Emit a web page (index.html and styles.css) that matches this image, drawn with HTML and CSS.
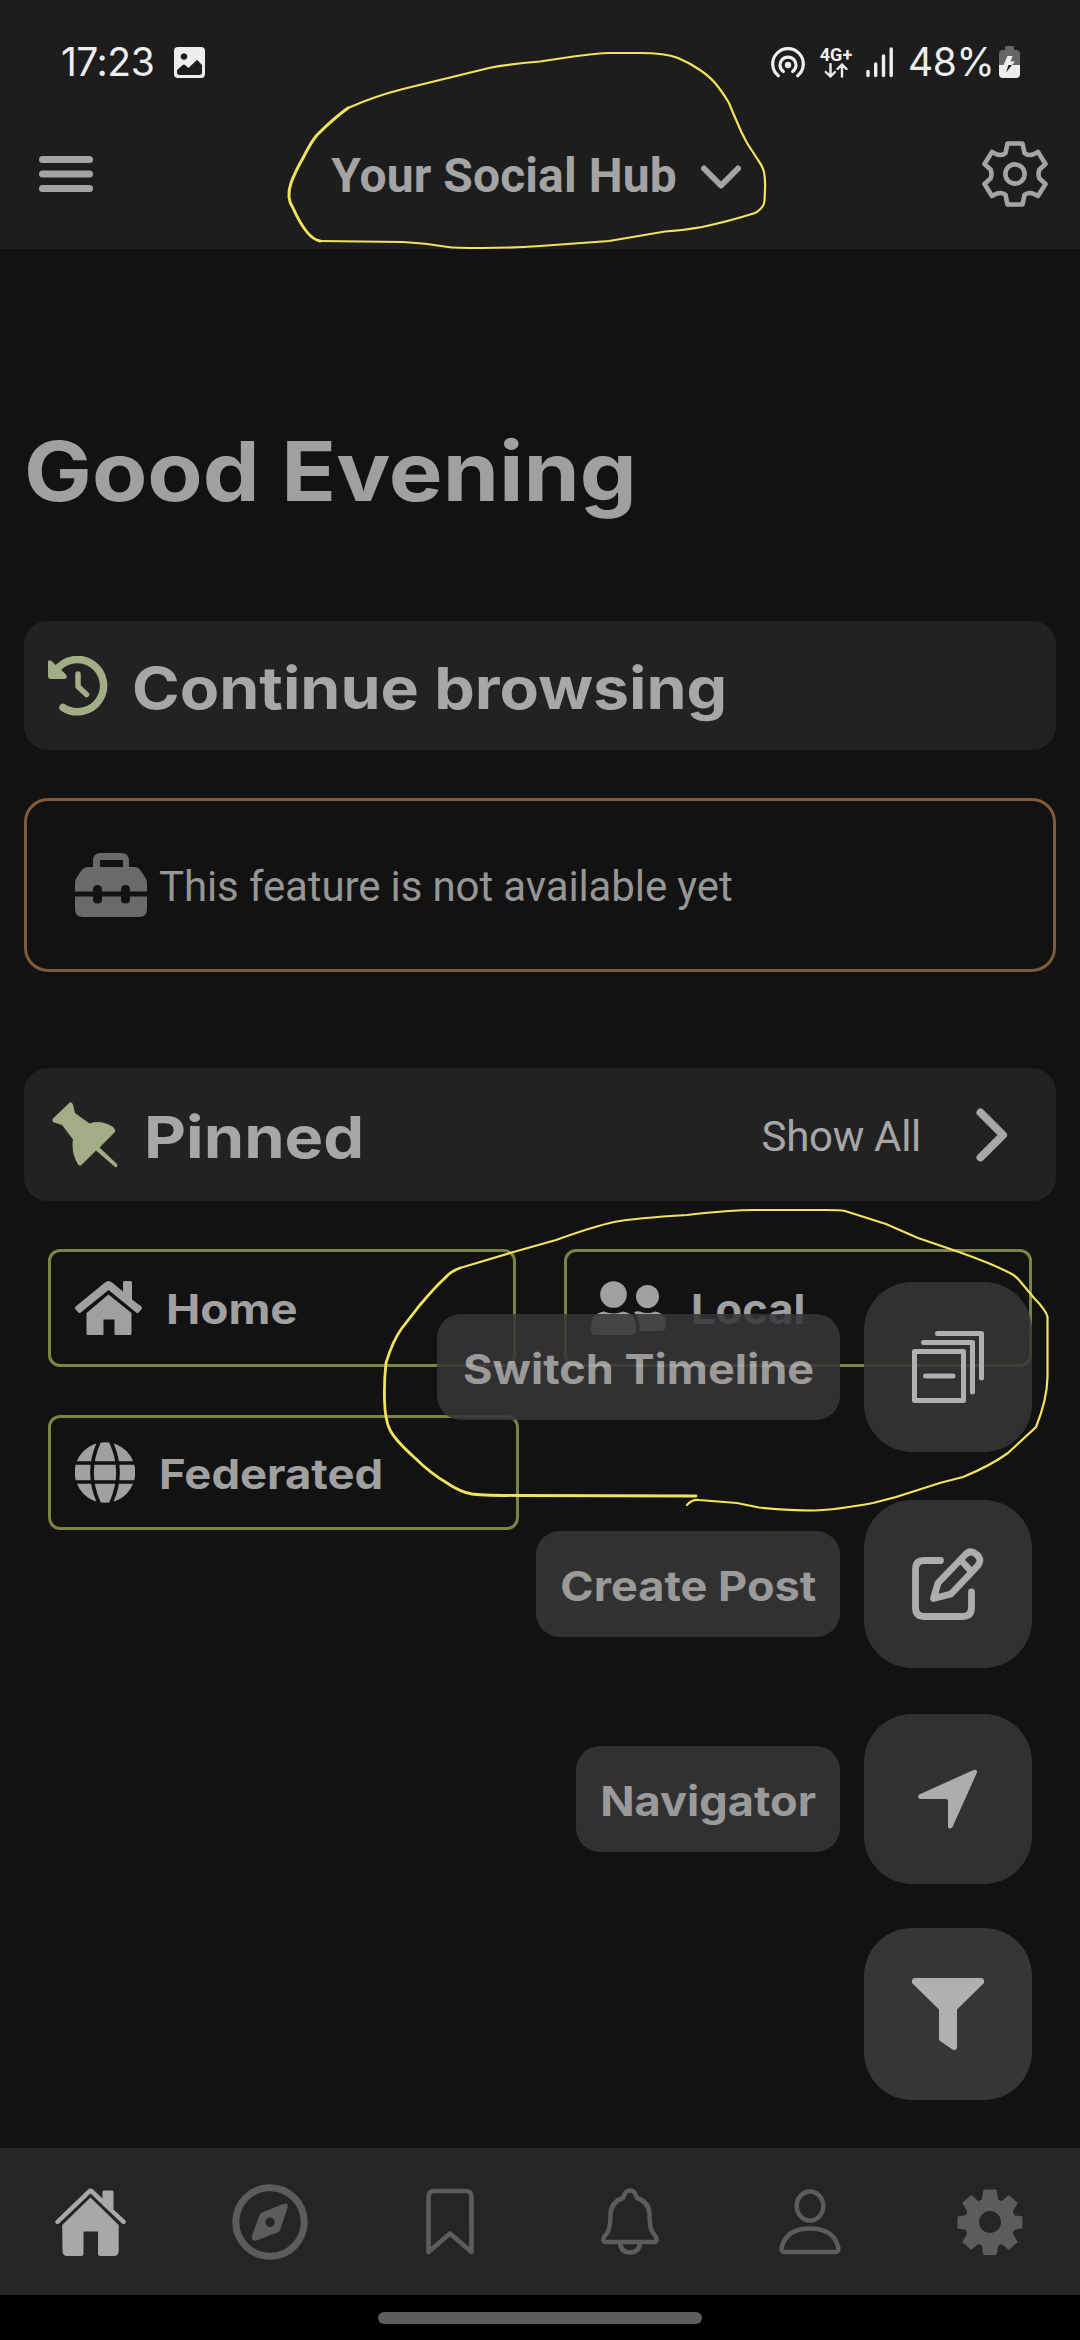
FILE: index.html
```html
<!DOCTYPE html>
<html lang="en">
<head>
<meta charset="utf-8">
<title>Your Social Hub</title>
<link rel="stylesheet" href="styles.css">
</head>
<body>
<div class="screen">
  <header class="header">
    <div class="status">
      <div class="status-left">
        <span class="clock">17:23</span>
        <svg width="31" height="31" viewBox="0 0 31 31"><path fill="#eee" fill-rule="evenodd" d="M4 0h23a4 4 0 0 1 4 4v23a4 4 0 0 1-4 4H4a4 4 0 0 1-4-4V4a4 4 0 0 1 4-4zM10 6.200a3.300 3.300 0 1 0 .01 0zM3 25.500c0 1.500 1 2.500 2.500 2.500h20c1.500 0 2.500-1 2.500-2.500V18l-4-4.300c-.8-.8-1.200-.8-2 0L14.500 21 11 18c-.8-.7-1.400-.7-2.200 0L3 23z"/></svg>
      </div>
      <div class="status-right">
        <svg class="hotspot" width="34" height="31" viewBox="0 0 34 31" fill="none" stroke="#eee" stroke-width="3.200" stroke-linecap="round"><circle cx="17" cy="18" r="3.200" fill="#eee" stroke="none"/><path d="M12.300 24.500a8 8 0 1 1 9.400 0M7.300 28.800a15.300 15.300 0 1 1 19.400 0"/></svg>
        <span class="network"><span class="network-type">4G+</span>
          <svg width="24" height="15" viewBox="0 0 24 15" fill="none" stroke="#eee" stroke-width="2.400" stroke-linecap="round" stroke-linejoin="round"><path d="M6.500 1v12.500M1.800 9l4.700 4.500L11 9M18 13.500V1.500M13.500 6 18 1.500 22.500 6"/></svg></span>
        <svg class="signal" width="28" height="31" viewBox="0 0 28 31" stroke="#eee" stroke-width="3.400" stroke-linecap="round"><path d="M2 24.500v4M9.700 17v11.500M17.500 9v19.500M25.200 2v26.500"/></svg>
        <span class="battery-level">48%</span>
        <svg class="battery" width="21" height="32" viewBox="0 0 21 32"><path fill="#666" d="M6 1.500Q6 0 7.500 0h6Q15 0 15 1.500V4h2q4 0 4 4v11H0V8q0-4 4-4h2z"/><path fill="#eee" d="M0 19h21v9q0 4-4 4H4q-4 0-4-4z"/><path fill="#eee" d="M8.500 10h5l-2 5.500H16L13 19H4.500z"/><path fill="#1d1d1d" d="M9.500 19H13L7 26.500z"/></svg>
      </div>
    </div>
    <div class="bar">
      <svg width="54" height="36" viewBox="0 0 54 36" stroke="#a4a4a4" stroke-width="7" stroke-linecap="round"><path d="M3.500 3.500h47M3.500 18h47M3.500 32.500h47"/></svg>
      <div class="title"><span>Your Social Hub</span>
        <svg width="40" height="24" viewBox="0 0 40 24" fill="none" stroke="#a4a4a4" stroke-width="6" stroke-linecap="round" stroke-linejoin="round"><path d="M3 3.500l17 17 17-17"/></svg></div>
      <svg width="66" height="68" viewBox="-33 -34 66 68" fill="none" stroke="#a4a4a4" stroke-width="4.600" stroke-linejoin="round"><circle r="9.600"/><path d="M-7.500-30.500h15l2 9.500q3 3 8.500 1.500l5-2.500 7.500 12-6 5.500q-2 4.500 0 9l6 5.500-7.500 12-5-2.500q-5.500-1.500-8.500 1.500l-2 9.500h-15l-2-9.500q-3-3-8.500-1.500l-5 2.500-7.500-12 6-5.500q2-4.500 0-9l-6-5.500 7.500-12 5 2.500q5.500 1.500 8.500-1.500z"/></svg>
    </div>
  </header>

  <main class="content">
    <h1 class="greeting">Good Evening</h1>
    <section class="section-head continue">
      <svg width="60" height="60" viewBox="0 0 60 60" fill="none" stroke="#a2ad85" stroke-width="7.500" stroke-linecap="round" stroke-linejoin="round"><path d="M8 14.500A26.200 26.200 0 1 1 15 51.500"/><path fill="#a2ad85" stroke="none" d="M0 6.500q0-4 4-1L18 18.500q2 4-1.500 4.500H3q-3 0-3-3z"/><path stroke-width="5.500" d="M30 18v12.500l8.500 8"/></svg>
      <h2>Continue browsing</h2>
    </section>
    <div class="notice">
      <svg width="72" height="64" viewBox="0 0 72 64" fill="#6a6a6a"><path fill-rule="evenodd" d="M18 14V8q0-8 8-8h20q8 0 8 8v6h5q4 0 7 4l4 6q2 3 2 6v8.500H55V36q-.500-4-4.500-4T46 36v2.500H27V36q-.500-4-4.500-4T18 36v2.500H0V30q0-3 2-6l4-6q3-4 7-4zM25 7v7h23V7z"/><path d="M0 43.500h18V47q.500 3.500 4.500 3.500T27 47v-3.500h19V47q.500 3.500 4.500 3.500T55 47v-3.500h17V56q0 8-8 8H8q-8 0-8-8z"/></svg>
      <span>This feature is not available yet</span>
    </div>
    <section class="section-head pinned">
      <svg width="66" height="66" viewBox="0 0 66 66" fill="#a2ad85"><path d="M17 1.200q2-2.500 4 1.300l2 8.500 14.500 10.500Q49 17.500 61 25q4 3.500 1 6L47.500 45.500 65 62q1.200 2.500-1.300 3.500L44 48.500 29.500 63q-2 1.500-3.500-.5-7-11.500-5-25L10 23l-8-2.500Q-1 18.500 1.500 16z"/></svg>
      <h2>Pinned</h2>
      <span class="show-all">Show All</span>
      <svg width="32" height="54" viewBox="0 0 32 54" fill="none" stroke="#a7a7a7" stroke-width="8" stroke-linecap="round" stroke-linejoin="round"><path d="M4.500 4.500 27 27 4.500 49.500"/></svg>
    </section>
    <div class="pins">
      <div class="pin home">
        <svg width="67" height="54" viewBox="0 0 67 54" fill="#a0a0a0"><path d="M11.500 32 33.500 13.500 56.500 32v20.500q0 1.500-1.500 1.500H40.500q-1 0-1-1V38.500h-11V53q0 1-1 1H13q-1.500 0-1.500-1.500z"/><path d="M.7 25.500 30 1.500q3.500-3 7 0l11 9V1.500Q48 0 49.500 0h6Q57 0 57 1.500v17l9.300 7q1.200 1.200.4 2.500l-3 3.500q-1.200 1-2.500 0L33.500 9 5.800 31.500q-1.300 1-2.500 0L.3 28q-.8-1.500.4-2.500z"/></svg>
        <span>Home</span></div>
      <div class="pin local">
        <svg width="76" height="54" viewBox="0 0 76 54" fill="#a0a0a0"><circle cx="22.500" cy="13.500" r="13.300"/><circle cx="56.500" cy="15.500" r="11.500"/><path d="M13 30.500q9.500 4 19 0 13 2 13 15V49q0 5-5 5H5q-5 0-5-5v-3.500Q0 32.500 13 30.500zM43 31q3-1 6-.5 7.500 3 15 0 11 1.500 11 13.500 0 6-5 6H48.500Q50 38 43 31z"/></svg>
        <span>Local</span></div>
      <div class="pin federated">
        <svg width="60" height="61" viewBox="0 0 60 61"><circle cx="30" cy="30.500" r="30.300" fill="#a0a0a0"/><path fill="none" stroke="#121212" stroke-width="3.700" d="M0 21h60M0 40h60M24 0q-14 30.500 0 61M36 0q14 30.500 0 61"/></svg>
        <span>Federated</span></div>
    </div>
  </main>

  <nav class="tabs">
    <a><svg width="71" height="68" viewBox="0 0 71 68" fill="#a8a8a8"><path d="M7.200 37 35.500 9.500 63.700 37v26q0 5-5 5H45q-2 0-2-2V43.500H28.500V66q0 2-2 2h-14q-5 0-5-5z"/><path d="M.8 32.500 33 1.500q2.500-2.200 5 0l9.500 9V4q0-1.500 1.500-1.500h8q1.500 0 1.500 1.500v17.500l12 11q1 1.700-.3 3-1.400 1.200-3.200 0L35.500 5.500 4 35.500q-1.600 1.200-3 0-1.500-1.300-.2-3z"/></svg></a>
    <a><svg width="76" height="76" viewBox="0 0 76 76"><circle cx="38" cy="38" r="34.200" fill="none" stroke="#5c5c5c" stroke-width="7"/><path fill="#5c5c5c" fill-rule="evenodd" d="M51 20q6-2 4.500 4L48 46q-.500 1.500-2.500 2.500L24.500 56.500q-5.500 1-4.500-4.500L27.500 31q.5-1.500 2.500-2.500zM38 33.500a4.700 4.700 0 1 0 .01 0z"/></svg></a>
    <a><svg width="48" height="67" viewBox="0 0 48 67" fill="none" stroke="#5c5c5c" stroke-width="4.600" stroke-linejoin="round"><path d="M2.500 64V9q0-6 6-6h31q6 0 6 6v55L24 45.500z"/></svg></a>
    <a><svg width="58" height="67" viewBox="0 0 58 67" fill="none" stroke="#5c5c5c" stroke-width="4.500" stroke-linejoin="round"><path d="M22 10Q24 2.500 29 2.500T36 10Q48 14 48.500 26q0 15 3.500 19l3 4q2 5-2 5H5q-4 0-2-5l3-4q3.500-4 3.500-19Q10 14 22 10zM19 55q1 9.500 10 9.500T39 55"/></svg></a>
    <a><svg width="62" height="67" viewBox="0 0 62 67" fill="none" stroke="#5c5c5c" stroke-width="4.500" stroke-linejoin="round"><ellipse cx="31" cy="18" rx="13.300" ry="14.500"/><path d="M5.500 64Q2 64 2.700 59.500 7 40.500 31 40.500t28.300 19Q60 64 56.500 64z"/></svg></a>
    <a><svg width="66" height="66" viewBox="-33 -33 66 66" fill="#5c5c5c"><path fill-rule="evenodd" d="M-6.500-32.500h13l1.700 10 3.600 1.500 7-6 9 8-5 8.500 1.500 3.700 8.200 1.300v12l-8.200 1.300-1.500 3.700 5 8.500-9 8-7-6-3.600 1.500-1.700 10h-13l-1.700-10-3.600-1.500-7 6-9-8 5-8.500-1.500-3.700-8.200-1.300v-12l8.200-1.300 1.500-3.700-5-8.500 9-8 7 6 3.600-1.500zM0-11a11 11 0 1 0 .01 0z"/></svg></a>
  </nav>
  <div class="gesture"><span class="handle"></span></div>

  <div class="fabs">
    <div class="fab-row">
      <span class="fab-label switch"><span>Switch Timeline</span></span>
      <span class="fab"><svg width="72" height="72" viewBox="0 0 72 72" fill="none" stroke="#b0b0b0" stroke-width="5" stroke-linecap="round" stroke-linejoin="round"><path d="M2.500 20.500h49v49h-49zM13.500 45H41M11.500 11.500h49V61M25.500 2.500h44V47"/></svg></span>
    </div>
    <div class="fab-row second">
      <span class="fab-label create"><span>Create Post</span></span>
      <span class="fab"><svg width="72" height="72" viewBox="0 0 72 72" fill="none" stroke="#adadad" stroke-width="6.800" stroke-linecap="round" stroke-linejoin="round"><path d="M28.500 12.500h-16q-9 0-9 9v38q0 9 9 9h38q9 0 9-9V44M21.500 50.500 26 35 52.500 7.500q5.500-6.500 11.500-1.500 7 5.500 1.500 12L39 46zM48.500 12l11 11.500"/></svg></span>
    </div>
    <div class="fab-row third">
      <span class="fab-label navigator"><span>Navigator</span></span>
      <span class="fab"><svg width="72" height="72" viewBox="0 0 72 72" fill="#adadad"><path d="M61.500 7q4-1 3.500 2.500L40.500 64q-3 3-4.500 0V38q0-2-2-2H8q-3.500-1.500-.7-4.500z"/></svg></span>
    </div>
    <div class="fab-row fourth">
      <span class="fab main"><svg width="72" height="72" viewBox="0 0 72 72" fill="#b0b0b0"><path d="M3 0h66q3 0 3 3v2L45 31.500V70q-1 3-4.500 1.500L28 63q-1-1-1-2V31.500L0 5V3q0-3 3-3z"/></svg></span>
    </div>
  </div>

  <svg class="marks" width="1080" height="2340" viewBox="0 0 1080 2340" fill="none" stroke="#f1e45c" stroke-linecap="round">
    <path stroke-width="2.200" d="M348 108Q375 96 403 89L489 68Q510 64 540 61.500L570 57Q600 53 609 53H640Q665 53 678 58Q690 63 700 70Q712 78 719 88Q725 96 729 103Q733 113 737 122Q741 132 747 143L758 160Q763 167 764 172Q765.500 180 765 190L764.500 201Q764 208 755 213Q730 221 702 227Q685 230 665 231.500L609 241L540 246Q510 248 482 248T448 247Q425 243 403 242L320 241"/>
    <path stroke-width="3" d="M320 241Q307 239 293 208Q286 198 291 183Q295 172 303 158Q311 142 317 135Q334 118 348 108"/>
    <path stroke-width="2.200" d="M687 1505Q692 1499 699 1500L737 1503L759 1507.500Q790 1510.500 814 1510.500Q835 1510 873 1503Q895 1498 918 1490T963 1477Q990 1466 1008 1453L1036 1427Q1047 1400 1047.500 1377V1317Q1046 1310 1034 1298L1019 1280Q1015 1275 1008 1272Q990 1263 959 1252L918 1238L886 1224L845 1211Q840 1210 825 1210H755Q730 1210 687 1215Q635 1218 614 1222Q595 1226 556 1240L510 1253L460 1268"/>
    <path stroke-width="2.800" d="M460 1268Q451 1271 445 1278Q435 1287 420 1305L402 1328Q393 1340 386 1363Q384 1380 384.500 1400Q385 1420 390 1430Q395 1440 415 1458Q430 1473 447 1483Q460 1492 472 1494Q480 1495.500 519 1495.500L696 1496"/>
  </svg>
</div>
</body>
</html>
```
FILE: styles.css
```css
* { box-sizing: border-box; margin: 0; padding: 0; }

body {
  background: #121212;
  color: #a0a0a0;
  font-family: Roboto, sans-serif;
}

svg { display: block; flex: none; }

.screen {
  position: relative;
  width: 1080px;
  height: 2340px;
  display: flex;
  flex-direction: column;
  overflow: hidden;
}

/* header */
.header { height: 249px; background: #1d1d1d; }

.status {
  height: 124px;
  padding: 0 60px 0 61px;
  display: flex;
  align-items: center;
  justify-content: space-between;
  color: #eee;
}
.status-left, .status-right { display: flex; align-items: center; }
.clock { width: 113px; font: 400 39px/48px Inter, sans-serif; letter-spacing: -0.5px; }
.signal { margin-left: 13px; }
.network { width: 34px; margin-left: 14px; display: flex; flex-direction: column; align-items: center; }
.network-type { font: 700 18px/17px Roboto, sans-serif; }
.battery-level { width: 91px; margin-left: 14px; font: 400 39px/48px Inter, sans-serif; letter-spacing: -0.4px; }

.bar {
  height: 100px;
  padding: 0 32px 0 39px;
  display: flex;
  align-items: center;
  justify-content: space-between;
}
.title { display: flex; align-items: center; gap: 24px; margin-left: -3px; color: #a4a4a4; font: 700 48px/60px Roboto, sans-serif; letter-spacing: 0.1px; }
.title span { padding-top: 3px; }
.title svg { margin-top: 6px; }

/* home feed */
.content { flex: 1; padding: 0 24px; }

.greeting {
  height: 100px;
  margin-top: 173px;
  font: 700 82px/100px Inter, sans-serif;
  white-space: nowrap;
  transform: scaleX(1.103);
  transform-origin: left;
}

.section-head {
  display: flex;
  align-items: center;
  border-radius: 24px;
  background: #222;
}
.section-head h2 {
  font: 700 58px/70px Inter, sans-serif;
  color: #a7a7a7;
  white-space: nowrap;
  transform: scaleX(1.111);
  transform-origin: left;
}

.continue { height: 129px; margin-top: 99px; padding: 0 24px; gap: 24px; }
.continue h2 { padding-top: 4px; }

.notice {
  height: 174px;
  margin-top: 48px;
  padding: 0 48px;
  display: flex;
  align-items: center;
  gap: 12px;
  border: 3px solid #805b3c;
  border-radius: 24px;
  font-size: 42px;
  letter-spacing: -0.12px;
  color: #969696;
}
.notice span { padding-top: 2px; }

.pinned { height: 133px; margin-top: 96px; padding: 0 48px 0 28px; }
.pinned h2 { margin-left: 26px; padding-top: 4px; transform: scaleX(1.12); }
.show-all { margin-left: auto; margin-right: 55px; padding-top: 4px; font-size: 42px; letter-spacing: -0.3px; color: #a7a7a7; }

.pins { display: grid; grid-template-columns: 471px 468px; column-gap: 45px; row-gap: 48px; margin-top: 48px; padding-left: 24px; }
.pin {
  height: 118px;
  padding: 0 24px;
  display: flex;
  align-items: center;
  gap: 24px;
  border: 3px solid #7e8243;
  border-radius: 12px;
  font: 700 41px/54px Inter, sans-serif;
}
.home { width: 468px; }
.federated { height: 115px; }
.pin span { padding-top: 2px; transform: scaleX(1.108); transform-origin: left; }
.home span { transform: scaleX(1.12); }
.local span { transform: scaleX(1.06); }

/* bottom bar */
.tabs { height: 147px; display: grid; grid-template-columns: repeat(6, 1fr); background: #252525; }
.tabs a { display: flex; align-items: center; justify-content: center; }
.gesture { height: 45px; padding-top: 17px; background: #000; }
.handle { display: block; width: 324px; height: 12px; margin: 0 auto; border-radius: 6px; background: #5d5d5d; }

/* floating actions above the feed */
.fabs {
  position: absolute;
  top: 1282px;
  right: 48px;
  display: flex;
  flex-direction: column;
}
.fab-row { display: flex; align-items: center; justify-content: flex-end; gap: 24px; height: 170px; }
.second { height: 168px; margin-top: 48px; }
.third { margin-top: 46px; }
.fourth { height: 172px; margin-top: 44px; }
.fab {
  width: 168px;
  height: 100%;
  display: flex;
  align-items: center;
  justify-content: center;
  border-radius: 48px;
  background: rgba(54, 54, 54, 0.866);
}
.main { background: #363636; }
.fab-label {
  height: 106px;
  border-radius: 24px;
  background: #363636;
  color: #afafaf;
  opacity: 0.866;
  font: 700 41px/110px Inter, sans-serif;
  text-align: center;
  white-space: nowrap;
}
.fab-label span { display: inline-block; transform: scaleX(1.1); }
.switch { width: 403px; }
.create { width: 304px; }
.navigator { width: 264px; }

/* hand-drawn rings */
.marks { position: absolute; top: 0; left: 0; pointer-events: none; }
```
